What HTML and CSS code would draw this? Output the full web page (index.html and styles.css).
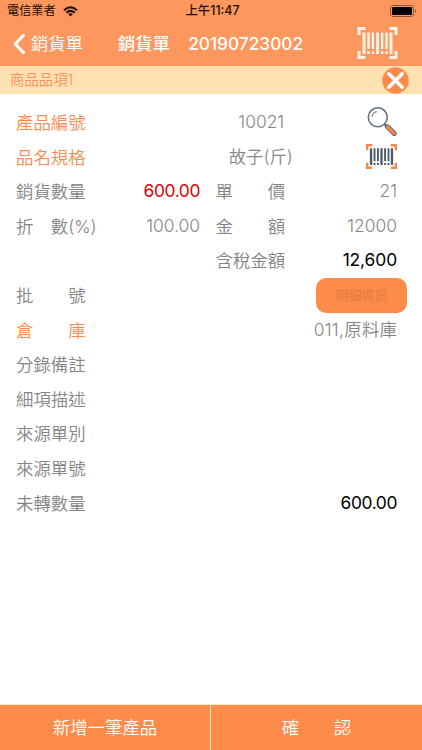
FILE: index.html
```html
<!DOCTYPE html>
<html lang="zh-Hant">
<head>
<meta charset="utf-8">
<title>銷貨單</title>
<link rel="stylesheet" href="styles.css">
</head>
<body>
<svg class="defs" width="0" height="0" aria-hidden="true">
  <symbol id="scan" viewBox="0 0 40 32">
    <path class="corner" d="M1.5 8V1.5H8M32 1.5H38.5V8M38.5 24V30.5H32M8 30.5H1.5V24" fill="none" stroke-width="3"/>
    <path d="M6.5 5.5V27M33.5 5.5V27" fill="none" stroke-width="3"/>
    <path d="M11 5.5V22M15.4 5.5V22M24.6 5.5V22M29 5.5V22M11 24.3V27M15.4 24.3V27M24.6 24.3V27M29 24.3V27" fill="none" stroke-width="2.4"/>
    <path d="M20 5.5V27" fill="none" stroke-width="3"/>
  </symbol>
</svg>
<div class="app">
  <header class="top">
    <div class="status">
      <div class="carrier">電信業者
        <svg width="15" height="11" viewBox="0 0 15 11"><g fill="none" stroke="#1c0f08" stroke-width="2"><path d="M1 4.2Q7.5-1.8 14 4.2"/><path d="M3.3 6.8Q7.5 3 11.7 6.8"/></g><path d="M5.2 8.2Q7.5 6.4 9.8 8.2L7.5 10.6Z" fill="#1c0f08"/></svg>
      </div>
      <div class="time">上午11:47</div>
      <svg class="battery" width="27" height="12" viewBox="0 0 27 12"><rect x=".5" y=".5" width="23" height="11" rx="2.6" fill="none" stroke="#8b5333"/><rect x="2" y="2" width="20" height="8" rx="1.2" fill="#000"/><path d="M25 4Q27 6 25 8Z" fill="#8b5333"/></svg>
    </div>
    <nav class="nav">
      <div class="back"><svg width="13" height="22" viewBox="0 0 13 22"><path d="M11.3 1.4L2.2 11L11.3 20.6" fill="none" stroke="#fff" stroke-width="2.9"/></svg><span>銷貨單</span></div>
      <h1 class="title">銷貨單　<span>20190723002</span></h1>
      <svg class="scan-light" width="41" height="32"><use href="#scan"/></svg>
    </nav>
  </header>
  <div class="section">
    <span>商品品項1</span>
    <svg width="27" height="27" viewBox="0 0 27 27"><circle cx="13.5" cy="13.5" r="13.2" fill="#fc8a48"/><path d="M6.8 6.8L20.2 20.2M20.2 6.8L6.8 20.2" stroke="#fff" stroke-width="3.6" stroke-linecap="round"/></svg>
  </div>
  <main class="form">
    <div class="row"><span class="key">產品編號</span><span class="mid">10021</span>
      <svg class="glass" width="30" height="30" viewBox="0 0 30 30"><circle cx="10.8" cy="10.3" r="9.5" fill="#fff" stroke="#61727f" stroke-width="1.6"/><path d="M5 10Q5.4 5.4 10 4.8" fill="none" stroke="#71818c" stroke-width="1.1"/><path d="M17.3 17L20 19.5" stroke="#50616e" stroke-width="2"/><path d="M20.4 19.8L27.2 26.4" stroke="#566470" stroke-width="5" stroke-linecap="round"/><path d="M20.6 20L27 26.2" stroke="#f58650" stroke-width="3.4" stroke-linecap="round"/></svg></div>
    <div class="row"><span class="key">品名規格</span><span class="mid">故子(斤)</span><svg class="scan-dark" width="31" height="25"><use href="#scan"/></svg></div>
    <div class="row pair"><span>銷貨數量</span><b class="red">600.00</b><span>單　　價</span><b>21</b></div>
    <div class="row pair"><span>折　數(%)</span><b>100.00</b><span>金　　額</span><b>12000</b></div>
    <div class="row pair"><span></span><b></b><span>含稅金額</span><b class="black sum">12,600</b></div>
    <div class="row"><span>批　　號</span><button class="detail">明細資訊</button></div>
    <div class="row"><span class="key">倉　　庫</span><span class="store">011,原料庫</span></div>
    <div class="row"><span>分錄備註</span></div>
    <div class="row"><span>細項描述</span></div>
    <div class="row"><span>來源單別</span></div>
    <div class="row"><span>來源單號</span></div>
    <div class="row"><span>未轉數量</span><b class="black">600.00</b></div>
  </main>
  <footer class="actions"><button>新增一筆產品</button><button>確　　認</button></footer>
</div>
</body>
</html>
```
FILE: styles.css
```css
* { box-sizing: border-box; }
body { margin: 0; background: #fff; font-family: Inter, "Noto Sans CJK TC", sans-serif; font-weight: 350; color: #858585; }
button { font: inherit; border: 0; padding: 0; }
.defs { position: absolute; }
.app { height: 750px; display: flex; flex-direction: column; }
.top { height: 66px; background: #fd975e; border-bottom: 1px solid #f3965f; }
.status { height: 22px; padding: 0 5px 0 7px; display: grid; grid-template-columns: 1fr auto 1fr; align-items: center; font-size: 12.2px; line-height: 22px; font-weight: 400; color: #1c0f08; }
.carrier { display: flex; align-items: center; gap: 7px; }
.time { font-weight: 500; font-size: 12.4px; padding-left: 1px; }
.battery { justify-self: end; }
.nav { height: 43px; padding: 0 24px 0 13px; display: flex; align-items: center; color: #fff; font-size: 17.3px; line-height: 43px; }
.back { display: flex; align-items: center; gap: 5px; width: 105px; }
.title { margin: 0; flex: 1; font-size: 17.3px; font-weight: 500; white-space: nowrap; }
.title span { font-weight: 550; margin-left: 1px; }
.section { height: 28px; padding: 0 13px 0 10px; display: flex; align-items: center; justify-content: space-between; background: #ffe1b2; color: #fa925a; font-size: 14.4px; line-height: 28px; }
.form { flex: 1; padding: 12px 25px 0 16px; font-size: 17.4px; }
.row { height: 34.6px; line-height: 34.6px; display: flex; align-items: center; justify-content: space-between; white-space: nowrap; }
.key { color: #fa8a50; }
.mid { flex: 1; padding-left: 70px; margin-top: -2px; text-align: center; }
.glass, .scan-dark { margin-top: -3px; }
.scan-dark { margin-top: -2px; }
.row b { font-weight: 350; margin-top: -2px; }
.row .red { color: #e00000; }
.row .black { color: #000; }
.row .red, .row .black { font-weight: 400; letter-spacing: -.4px; }
.row .sum { letter-spacing: -.1px; }
.store { letter-spacing: .3px; margin: -2px -.3px 0 0; }
.pair { display: grid; grid-template-columns: 84px 100px 102px 95px; }
.pair span:nth-of-type(2) { padding-left: 15.5px; }
.pair b { text-align: right; }
.detail { width: 91px; height: 35px; margin: -2px -10px 0 0; border-radius: 10px; background: #fd8c4a; color: #dd7b45; font-size: 13px; }
.scan-light { --corner: #fff3e7; stroke: #fff3e7; margin-top: -1px; }
.scan-dark { --corner: #f58650; stroke: #4c5966; }
.scan-dark, .scan-light { flex: none; }
.corner { stroke: var(--corner); }
.actions { height: 46px; border-top: 1px solid #ffe8c5; display: grid; grid-template-columns: 210px 211px; gap: 1px; background: #ffe8c5; }
.actions button { background: #fd8c4a; color: #fff; font-size: 17.4px; padding-bottom: 2px; }
```
